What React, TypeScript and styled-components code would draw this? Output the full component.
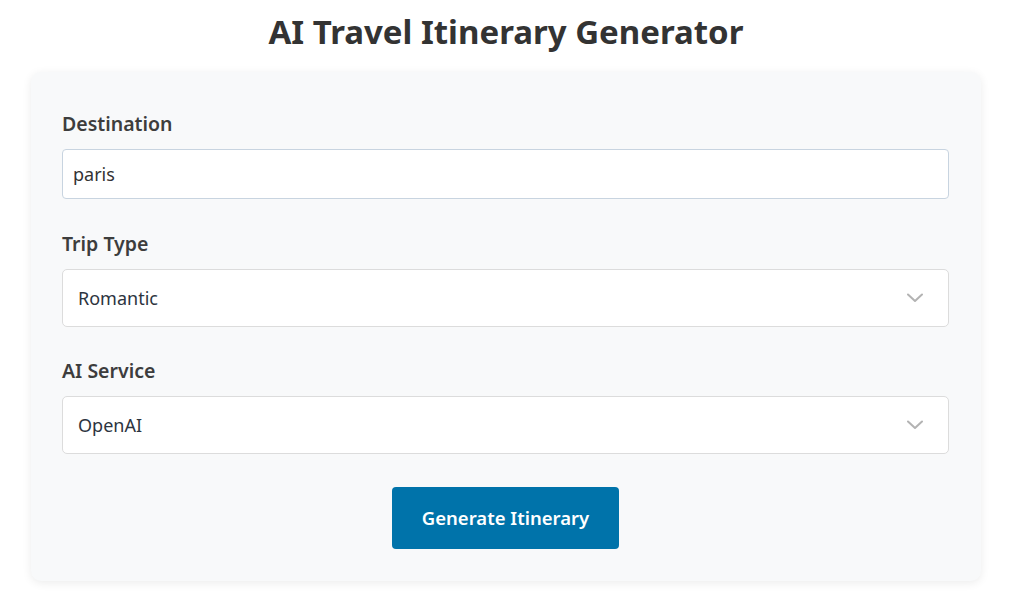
import React, { useState } from 'react';
import styled, { createGlobalStyle } from 'styled-components';

const GlobalStyle = createGlobalStyle`
  * { box-sizing: border-box; }
  body {
    margin: 0;
    background: #ffffff;
    font-family: 'Noto Sans', 'Open Sans', sans-serif;
    color: #333;
  }
`;

const Page = styled.div`
  padding: 13px 28px 20px 31px;
`;

const Title = styled.h1`
  margin: 0 0 21px;
  text-align: center;
  font-size: 33px;
  line-height: 38px;
  font-weight: 700;
  color: #333333;
`;

const Card = styled.form`
  width: 950px;
  background: #f8f9fa;
  border-radius: 10px;
  box-shadow: 0 2px 10px rgba(0, 0, 0, 0.08);
  padding: 40px 32px 32px 31px;
  display: flex;
  flex-direction: column;
`;

const Field = styled.div`
  display: flex;
  flex-direction: column;
  margin-bottom: 32.5px;
`;

const Label = styled.label`
  font-size: 19.5px;
  line-height: 24px;
  font-weight: 600;
  color: #3d3d3d;
  margin-bottom: 13px;
`;

const TextInput = styled.input`
  height: 50px;
  padding: 0 10px;
  font-family: inherit;
  font-size: 18px;
  color: #333;
  background: #fff;
  border: 1px solid #c8d4e0;
  border-radius: 4px;
  outline: none;
`;

const SelectWrap = styled.div`
  position: relative;
`;

const Select = styled.select`
  width: 100%;
  height: 58px;
  padding: 0 15px;
  font-family: inherit;
  font-size: 18px;
  color: #2c3440;
  background: #fff;
  border: 1px solid #dcdcdc;
  border-radius: 5px;
  appearance: none;
  outline: none;
`;

const Chevron = styled.svg`
  position: absolute;
  right: 26px;
  top: 50%;
  transform: translateY(-50%);
  pointer-events: none;
`;

const Actions = styled.div`
  display: flex;
  justify-content: center;
`;

const Button = styled.button`
  width: 227px;
  height: 62px;
  background: #0073aa;
  color: #fff;
  border: none;
  border-radius: 4px;
  font-family: inherit;
  font-size: 18.5px;
  font-weight: 600;
  cursor: pointer;
`;

const ChevronIcon = () => (
  <Chevron width="16" height="10" viewBox="0 0 16 10" fill="none">
    <path d="M1 1.5 L8 8 L15 1.5" stroke="#b3b3b3" strokeWidth="2" strokeLinecap="round" strokeLinejoin="round" />
  </Chevron>
);

const App = () => {
  const [destination, setDestination] = useState('paris');
  const [tripType, setTripType] = useState('Romantic');
  const [service, setService] = useState('OpenAI');

  return (
    <>
      <GlobalStyle />
      <Page>
        <Title>AI Travel Itinerary Generator</Title>
        <Card onSubmit={e => e.preventDefault()}>
          <Field>
            <Label htmlFor="destination">Destination</Label>
            <TextInput
              id="destination"
              value={destination}
              onChange={e => setDestination(e.target.value)}
            />
          </Field>
          <Field>
            <Label htmlFor="trip-type">Trip Type</Label>
            <SelectWrap>
              <Select id="trip-type" value={tripType} onChange={e => setTripType(e.target.value)}>
                <option>Romantic</option>
                <option>Adventure</option>
                <option>Family</option>
                <option>Business</option>
              </Select>
              <ChevronIcon />
            </SelectWrap>
          </Field>
          <Field>
            <Label htmlFor="service">AI Service</Label>
            <SelectWrap>
              <Select id="service" value={service} onChange={e => setService(e.target.value)}>
                <option>OpenAI</option>
                <option>Gemini</option>
              </Select>
              <ChevronIcon />
            </SelectWrap>
          </Field>
          <Actions>
            <Button type="submit">Generate Itinerary</Button>
          </Actions>
        </Card>
      </Page>
    </>
  );
};

export default App;
